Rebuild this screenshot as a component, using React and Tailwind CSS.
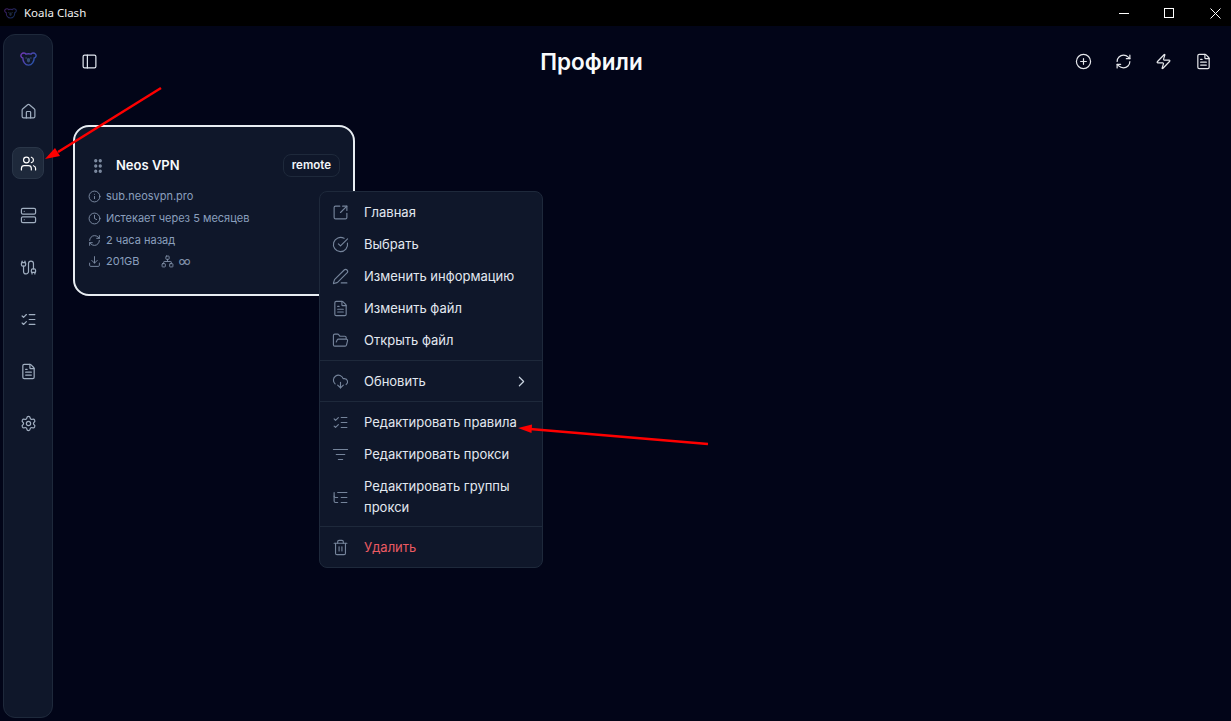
import React from 'react';
import {
  House, Users, Server, Cable, ListChecks, FileText, Settings, PanelLeft, CirclePlus, RefreshCw, Zap,
  Info, Clock, Download, Network, GripVertical, SquareArrowOutUpRight, CircleCheckBig, PenLine, FolderOpen,
  CloudDownload, ChevronRight, ListFilter, ListTree, Trash2,
} from 'lucide-react';

const Koala = ({ w = 18, id, opacity = 1 }) => (
  <svg width={w} height={(w * 20) / 24} viewBox="0 0 24 20" fill="none" opacity={opacity}>
    <defs>
      <linearGradient id={id} x1="0" y1="0" x2="1" y2="0.600">
        <stop offset="0" stopColor="#8b3fd9" />
        <stop offset="1" stopColor="#2f63c9" />
      </linearGradient>
    </defs>
    <path
      d="M8.500 3C10 2.500 14 2.500 15.500 3 16.500 1 20 .8 22 3 23.500 5 22.500 8 20 8.500 20 13.500 17 18.500 12 18.500S4 13.500 4 8.500C1.500 8 .5 5 2 3 4 .8 7.500 1 8.500 3Z"
      stroke={`url(#${id})`}
      strokeWidth="2"
    />
    <path d="M7.500 8.500h2.500M14 8.500h2.500" stroke="#3f5a86" strokeWidth="1.600" />
    <path d="M12 8.500c-1.500 0-2.300 1.200-2.300 2.800S10.700 15 12 15s2.300-2.100 2.300-3.700S13.500 8.500 12 8.500Z" fill="#3f5a86" />
  </svg>
);

const navIcons = [House, Users, Server, Cable, ListChecks, FileText, Settings];

const Row = ({ icon: Icon, children }) => (
  <div className="flex items-center h-[22px] gap-[5px] text-[11px] text-[#8a9fbd]">
    <Icon size={13} strokeWidth={1.7} className="text-[#7e8ea6] shrink-0" />
    {children}
  </div>
);

const MenuItem = ({ icon: Icon, children, danger, right, tall }) => (
  <div className={`flex items-center min-h-8 pl-[8px] pr-[8px] text-[13px] leading-[21px] ${tall ? 'pt-[6px] pb-[4px]' : 'py-[5px]'} ${danger ? 'text-[#ea5a62]' : 'text-[#e2e8f0]'}`}>
    <Icon size={17} strokeWidth={1.6} className="text-[#75849b] shrink-0 mr-[15px]" />
    <span className="flex-1">{children}</span>
    {right}
  </div>
);

const Sep = () => <div className="h-px bg-[#1e293b] my-1 mx-[-4px]" />;

export default function App() {
  return (
    <div
      className="relative flex flex-col h-screen w-full overflow-hidden bg-[#020518] text-white"
      style={{ fontFamily: 'Inter, "Noto Sans", sans-serif' }}
    >
      {/* title bar */}
      <div className="flex items-center h-[26px] bg-black shrink-0">
        <div className="w-[24px] flex justify-center pt-[1px] pr-[4px]"><Koala w={13} id="kg2" opacity={0.45} /></div>
        <span className="text-[11.500px] text-[#f1f1f1]" style={{ fontFamily: '"Noto Sans", Inter, sans-serif' }}>Koala Clash</span>
        <div className="ml-auto flex items-center pr-[10px]">
          <svg width="10" height="10" viewBox="0 0 10 10" stroke="#fff" strokeWidth="1" fill="none"><path d="M0 5.500h10" /></svg>
          <svg className="ml-[35px]" width="10" height="10" viewBox="0 0 10 10" stroke="#fff" strokeWidth="1" fill="none"><rect x="0.500" y="0.500" width="9" height="9" /></svg>
          <svg className="ml-[36px]" width="11" height="11" viewBox="0 0 11 11" stroke="#fff" strokeWidth="1" fill="none"><path d="M.5.500l10 10M10.500.500l-10 10" /></svg>
        </div>
      </div>

      <div className="flex flex-1 min-h-0">
        {/* sidebar */}
        <aside className="w-[50px] ml-[3px] mt-[8px] mb-[3px] rounded-[12px] border border-[#1e293b] bg-[#0f172a] flex flex-col items-center pt-[8px] shrink-0">
          <div className="h-[32px] flex items-center justify-center pt-[1px]"><Koala w={17} id="kg1" opacity={0.8} /></div>
          <div className="flex flex-col gap-[20px] mt-[20px] items-center">
            {navIcons.map((Icon, i) => (
              <div
                key={i}
                className={`w-8 h-8 rounded-[8px] flex items-center justify-center ${i === 1 ? 'bg-[#1e293b] border border-[#2a3648] text-white' : 'text-[#a0aec0]'}`}
              >
                <Icon size={17} strokeWidth={1.7} />
              </div>
            ))}
          </div>
        </aside>

        {/* main */}
        <main className="flex-1 min-w-0">
          <header className="relative flex items-center h-[70px] pl-[28px] pr-[19px]">
            <PanelLeft size={17} strokeWidth={1.7} className="text-[#e2e8f0]" />
            <h1 className="absolute left-0 right-[101px] text-center text-[22.500px] font-semibold text-[#f8fafc] pt-[2px]">Профили</h1>
            <div className="ml-auto flex items-center gap-[23px]">
              {[CirclePlus, RefreshCw, Zap, FileText].map((Icon, i) => (
                <Icon key={i} size={17} strokeWidth={1.7} className="text-[#e5e7eb]" />
              ))}
            </div>
          </header>

          <div className="pl-[20px] pt-[29px]">
            <div className="w-[282px] h-[171px] rounded-[16px] border-2 border-[#e8edf2] bg-[#0f172a] px-[13px] pt-[26px]">
              <div className="flex items-center h-[25px] pl-[1px]">
                <GripVertical size={18} strokeWidth={2.400} className="text-[#7f8da3]" />
                <span className="ml-[9px] text-[13px] font-semibold text-[#f8fafc]">Neos VPN</span>
                <span className="ml-auto h-[23px] px-[8px] flex items-center rounded-[8px] border border-[#1e293b] text-[11.500px] font-semibold text-[#f1f5f9]">remote</span>
              </div>
              <div className="mt-[7px]">
                <Row icon={Info}>sub.neosvpn.pro</Row>
                <Row icon={Clock}>Истекает через 5 месяцев</Row>
                <Row icon={RefreshCw}>2 часа назад</Row>
                <div className="flex items-center h-[21px] text-[11px] text-[#8a9fbd]">
                  <Download size={13} strokeWidth={1.7} className="text-[#7e8ea6] shrink-0" />
                  <span className="ml-[5px]">201GB</span>
                  <Network size={13} strokeWidth={1.7} className="text-[#7e8ea6] ml-[21px]" />
                  <span className="ml-[5px] text-[13px] text-[#7e8ea6]">∞</span>
                </div>
              </div>
            </div>
          </div>
        </main>
      </div>

      {/* context menu */}
      <div className="absolute left-[319px] top-[191px] w-[224px] rounded-[8px] border border-[#1e293b] bg-[#0f172a] p-1">
        <MenuItem icon={SquareArrowOutUpRight}>Главная</MenuItem>
        <MenuItem icon={CircleCheckBig}>Выбрать</MenuItem>
        <MenuItem icon={PenLine}>Изменить информацию</MenuItem>
        <MenuItem icon={FileText}>Изменить файл</MenuItem>
        <MenuItem icon={FolderOpen}>Открыть файл</MenuItem>
        <Sep />
        <MenuItem icon={CloudDownload} right={<ChevronRight size={17} strokeWidth={1.7} className="text-[#cbd5e1]" />}>Обновить</MenuItem>
        <Sep />
        <MenuItem icon={ListChecks}>Редактировать правила</MenuItem>
        <MenuItem icon={ListFilter}>Редактировать прокси</MenuItem>
        <MenuItem icon={ListTree} tall>Редактировать группы прокси</MenuItem>
        <Sep />
        <MenuItem icon={Trash2} danger>Удалить</MenuItem>
      </div>

      {/* annotation arrows */}
      <svg className="absolute left-0 top-0 pointer-events-none" width="1231" height="721">
        <line x1="161" y1="88" x2="58" y2="152" stroke="#fe0000" strokeWidth="2.500" />
        <polygon points="45,159 55,148 60,156" fill="#fe0000" />
        <line x1="708" y1="444" x2="530" y2="429" stroke="#fe0000" strokeWidth="2.500" />
        <polygon points="518,428 532,424.500 531.500,433" fill="#fe0000" />
      </svg>
    </div>
  );
}
